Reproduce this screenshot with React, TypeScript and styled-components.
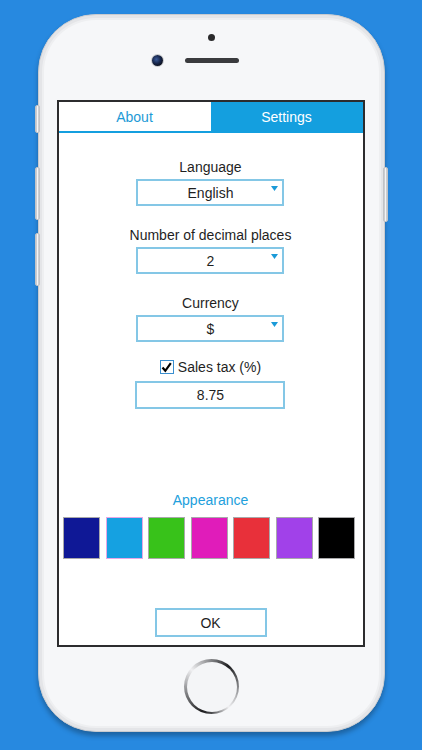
import React, {useState} from 'react';
import styled, {createGlobalStyle} from 'styled-components';

const GlobalStyle = createGlobalStyle`
  html, body {
    margin: 0;
    padding: 0;
    background: #2789e0;
  }
  body {
    font-family: "Liberation Sans", Arial, sans-serif;
  }
`;

const Stage = styled.div`
  width: 422px;
  height: 750px;
  overflow: hidden;
  background: #2789e0;
  padding: 14px 0 0 38px;
  box-sizing: border-box;
`;

const Phone = styled.div`
  position: relative;
  width: 347px;
  height: 718px;
  box-sizing: border-box;
  border-radius: 58px;
  background: #f6f7f9;
  border: 1px solid #c9cbcf;
  box-shadow: inset 0 0 0 3px #e4e5e8, inset 0 0 0 5px #eeeff1, 0 4px 5px rgba(0, 0, 0, 0.28);
  display: flex;
  flex-direction: column;
  align-items: center;
`;

const SideKey = styled.div<{ $side: 'left' | 'right'; $top: number; $h: number }>`
  position: absolute;
  ${p => p.$side === 'left' ? 'left: -4px;' : 'right: -4px;'}
  top: ${p => p.$top}px;
  width: 3px;
  height: ${p => p.$h}px;
  border-radius: 2px;
  background: linear-gradient(90deg, #b9bbbf, #f4f4f6, #b9bbbf);
  border: 1px solid #c1c3c7;
`;

const TopBezel = styled.div`
  height: 85px;
  width: 100%;
  display: flex;
  flex-direction: column;
  align-items: center;
  padding-top: 19px;
  box-sizing: border-box;
`;

const FrontDot = styled.div`
  width: 7px;
  height: 7px;
  border-radius: 50%;
  background: #2a2a2c;
  margin-bottom: 12px;
`;

const SensorRow = styled.div`
  width: 100%;
  display: grid;
  grid-template-columns: 1fr auto 1fr;
  align-items: center;
  height: 14px;
`;

const Lens = styled.div`
  justify-self: end;
  margin-right: 22px;
  width: 11px;
  height: 11px;
  border-radius: 50%;
  background: radial-gradient(circle at 40% 40%, #3a5a9a 0, #16254a 45%, #0c0f1a 75%);
  box-shadow: 0 0 0 1px #c7c9cd;
`;

const Speaker = styled.div`
  width: 54px;
  height: 5px;
  border-radius: 3px;
  background: #3a3b3e;
`;

const Screen = styled.div`
  width: 308px;
  height: 547px;
  margin-right: 2px;
  box-sizing: border-box;
  border: 2px solid #2c2c2e;
  background: #fff;
  display: flex;
  flex-direction: column;
  align-items: center;
`;

const Tabs = styled.div`
  width: 100%;
  display: flex;
  border-bottom: 2px solid #149fdf;
`;

const Tab = styled.div<{ $active?: boolean }>`
  flex: 1;
  height: 29px;
  display: flex;
  align-items: center;
  justify-content: center;
  font-size: 14px;
  background: ${p => p.$active ? '#149fdf' : '#fff'};
  color: ${p => p.$active ? '#fff' : '#1e9ad6'};
`;

const Form = styled.div`
  margin-top: 25px;
  display: flex;
  flex-direction: column;
  align-items: center;
`;

const Field = styled.div`
  display: flex;
  flex-direction: column;
  align-items: center;
  margin-bottom: 20px;
`;

const Label = styled.div`
  font-size: 14px;
  line-height: 18px;
  color: #1f1f1f;
  margin-bottom: 3px;
`;

const Select = styled.div`
  position: relative;
  width: 148px;
  height: 27px;
  box-sizing: border-box;
  border: 2px solid #84c7e6;
  display: flex;
  align-items: center;
  justify-content: center;
  font-size: 14px;
  color: #1f1f1f;
`;

const Caret = styled.svg`
  position: absolute;
  top: 5px;
  right: 4px;
`;

const CheckRow = styled.label`
  display: flex;
  align-items: center;
  gap: 4px;
  font-size: 14px;
  line-height: 18px;
  color: #1f1f1f;
  margin-top: -4px;
  margin-bottom: 5px;
`;

const CheckBox = styled.span`
  width: 12px;
  height: 12px;
  border: 1px solid #3a8fd0;
  background: #fff;
  display: flex;
  align-items: center;
  justify-content: center;
`;

const TaxInput = styled.div`
  width: 150px;
  height: 28px;
  box-sizing: border-box;
  border: 2px solid #84c7e6;
  display: flex;
  align-items: center;
  justify-content: center;
  font-size: 14px;
  color: #1f1f1f;
`;

const AppearanceTitle = styled.div`
  margin-top: 82px;
  font-size: 14px;
  line-height: 18px;
  color: #22a0dc;
`;

const Swatches = styled.div`
  margin-top: 8px;
  width: 292px;
  display: flex;
  justify-content: space-between;
  margin-right: 3px;
`;

const Swatch = styled.div<{ $color: string; $selected?: boolean }>`
  width: 37px;
  height: 42px;
  box-sizing: border-box;
  background: ${p => p.$color};
  border: 1px solid ${p => p.$selected ? '#e7a6e6' : '#a9a9ab'};
`;

const OkButton = styled.div`
  margin-top: 49px;
  width: 112px;
  height: 29px;
  box-sizing: border-box;
  border: 2px solid #84c7e6;
  display: flex;
  align-items: center;
  justify-content: center;
  font-size: 14px;
  color: #1f1f1f;
`;

const BottomBezel = styled.div`
  flex: 1;
  display: flex;
  justify-content: center;
  padding-top: 12px;
`;

const HomeRing = styled.div`
  width: 55px;
  height: 55px;
  border-radius: 50%;
  background: conic-gradient(from 200deg, #1c1c1e, #8a8b8e 60deg, #f0f0f2 110deg, #6a6b6e 170deg, #1c1c1e 200deg, #9a9b9e 260deg, #f0f0f2 300deg, #4a4b4e 340deg, #1c1c1e);
  display: flex;
  align-items: center;
  justify-content: center;
`;

const HomeFace = styled.div`
  width: 50px;
  height: 50px;
  border-radius: 50%;
  background: #f4f5f7;
`;

const colors = ['#0f1896', '#15a1e1', '#38c21a', '#e01cba', '#e8303a', '#a141e9', '#000000'];

const selects = [
    {label: 'Language', value: 'English'},
    {label: 'Number of decimal places', value: '2'},
    {label: 'Currency', value: '$'},
];

function App() {
    const [selected, setSelected] = useState(1);

    return (
        <>
            <GlobalStyle/>
            <Stage>
                <Phone>
                    <SideKey $side="left" $top={90} $h={26}/>
                    <SideKey $side="left" $top={152} $h={51}/>
                    <SideKey $side="left" $top={218} $h={51}/>
                    <SideKey $side="right" $top={152} $h={53}/>

                    <TopBezel>
                        <FrontDot/>
                        <SensorRow>
                            <Lens/>
                            <Speaker/>
                            <span/>
                        </SensorRow>
                    </TopBezel>

                    <Screen>
                        <Tabs>
                            <Tab>About</Tab>
                            <Tab $active>Settings</Tab>
                        </Tabs>

                        <Form>
                            {selects.map(s => <Field key={s.label}>
                                <Label>{s.label}</Label>
                                <Select>
                                    {s.value}
                                    <Caret width="7" height="5" viewBox="0 0 7 5">
                                        <path d="M0 0 L7 0 L3.5 5 Z" fill="#1a9ad8"/>
                                    </Caret>
                                </Select>
                            </Field>)}

                            <CheckRow>
                                <CheckBox>
                                    <svg width="11" height="11" viewBox="0 0 11 11">
                                        <path d="M1.5 5.5 L4.3 8.8 L9.8 1.2" fill="none" stroke="#000" strokeWidth="2.2"/>
                                    </svg>
                                </CheckBox>
                                Sales tax (%)
                            </CheckRow>
                            <TaxInput>8.75</TaxInput>
                        </Form>

                        <AppearanceTitle>Appearance</AppearanceTitle>
                        <Swatches>
                            {colors.map((c, i) =>
                                <Swatch key={c} $color={c} $selected={i === selected} onClick={() => setSelected(i)}/>
                            )}
                        </Swatches>

                        <OkButton>OK</OkButton>
                    </Screen>

                    <BottomBezel>
                        <HomeRing>
                            <HomeFace/>
                        </HomeRing>
                    </BottomBezel>
                </Phone>
            </Stage>
        </>
    );
}

export default App;
